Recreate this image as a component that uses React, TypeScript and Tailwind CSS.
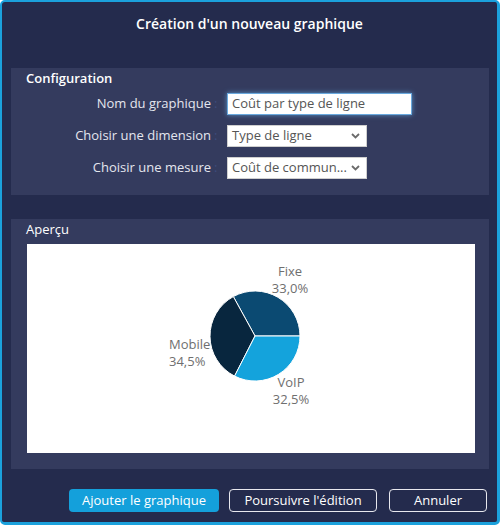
import React from "react";

const rows = [
  { label: "Nom du graphique", value: "Coût par type de ligne", kind: "input" },
  { label: "Choisir une dimension", value: "Type de ligne", kind: "select" },
  { label: "Choisir une mesure", value: "Coût de commun...", kind: "select" },
];

function Chevron() {
  return (
    <svg width="9" height="6" viewBox="0 0 9 6" className="shrink-0">
      <path d="M1 1 L4.5 4.5 L8 1" fill="none" stroke="#6b6b6b" strokeWidth="1.8" />
    </svg>
  );
}

function PieChart() {
  // centre and radius measured in the white area's own coordinates
  const labelColor = "#6f6f6f";
  return (
    <svg width="448" height="209" viewBox="0 0 448 209" className="block">
      <g stroke="#ffffff" strokeWidth="1" strokeLinejoin="round">
        <path d="M228 92 L273 92 A45 45 0 0 0 206.32 52.57 Z" fill="#0b4a72" />
        <path d="M228 92 L206.32 52.57 A45 45 0 0 0 207.57 132.1 Z" fill="#08263e" />
        <path d="M228 92 L207.57 132.1 A45 45 0 0 0 273 92 Z" fill="#14a3dc" />
      </g>
      <g fill={labelColor} fontSize="13" fontFamily="'Open Sans', sans-serif">
        <text x="263" y="32" textAnchor="middle">Fixe</text>
        <text x="263" y="49" textAnchor="middle">33,0%</text>
        <text x="142" y="105">Mobile</text>
        <text x="142" y="122">34,5%</text>
        <text x="264" y="143" textAnchor="middle">VoIP</text>
        <text x="264" y="160" textAnchor="middle">32,5%</text>
      </g>
    </svg>
  );
}

export default function App() {
  return (
    <div className="h-[525px] w-[500px] bg-white font-['Open_Sans',sans-serif]">
      <div className="flex h-full w-full flex-col rounded-[5px] border-t-2 border-l-2 border-r-[3px] border-b-[3px] border-[#1ba1dc] bg-[#242b4d]">
        <h1 className="pt-3 text-center text-[14px] font-semibold leading-[20px] text-white">
          Création d'un nouveau graphique
        </h1>

        <section className="ml-[9px] mr-[8px] mt-[34px] bg-[#343b5e] pb-4 pt-px">
          <h2 className="pl-[15px] text-[13px] font-semibold leading-[18px] text-white">Configuration</h2>
          <div className="mt-[6px] flex flex-col gap-[10px]">
            {rows.map((row) => (
              <div key={row.label} className="flex h-[22px] items-center text-[13px]">
                <span className="w-[200px] text-right text-[#e4e6ee]">{row.label}</span>
                <span className="w-[16px] pl-[3px] text-[#3e4c7c]">:</span>
                {row.kind === "input" ? (
                  <div className="flex h-[22px] w-[185px] items-center border border-[#6aa9de] bg-white pl-[4px] text-[#555] shadow-[0_0_5px_rgba(102,175,233,0.75)]">
                    {row.value}
                  </div>
                ) : (
                  <div className="flex h-[22px] w-[140px] items-center justify-between border border-[#cfcfcf] bg-white pl-[4px] pr-[6px] text-[#555]">
                    <span className="whitespace-nowrap">{row.value}</span>
                    <Chevron />
                  </div>
                )}
              </div>
            ))}
          </div>
        </section>

        <section className="ml-[9px] mr-[8px] mt-6 bg-[#343b5e] pb-4 pt-px">
          <h2 className="pl-[15px] text-[13px] font-medium leading-[18px] text-white">Aperçu</h2>
          <div className="ml-4 mr-[14px] mt-[6px] h-[209px] bg-white">
            <PieChart />
          </div>
        </section>

        <div className="mt-5 flex justify-end pr-[10px] text-[13px] text-white">
          <button type="button" className="h-[23px] w-[150px] rounded-[4px] bg-[#14a0db]">
            Ajouter le graphique
          </button>
          <button type="button" className="ml-[10px] h-[23px] w-[148px] rounded-[4px] border border-[#e8e8ee]">
            Poursuivre l'édition
          </button>
          <button type="button" className="ml-[12px] h-[23px] w-[98px] rounded-[4px] border border-[#e8e8ee]">
            Annuler
          </button>
        </div>
      </div>
    </div>
  );
}
